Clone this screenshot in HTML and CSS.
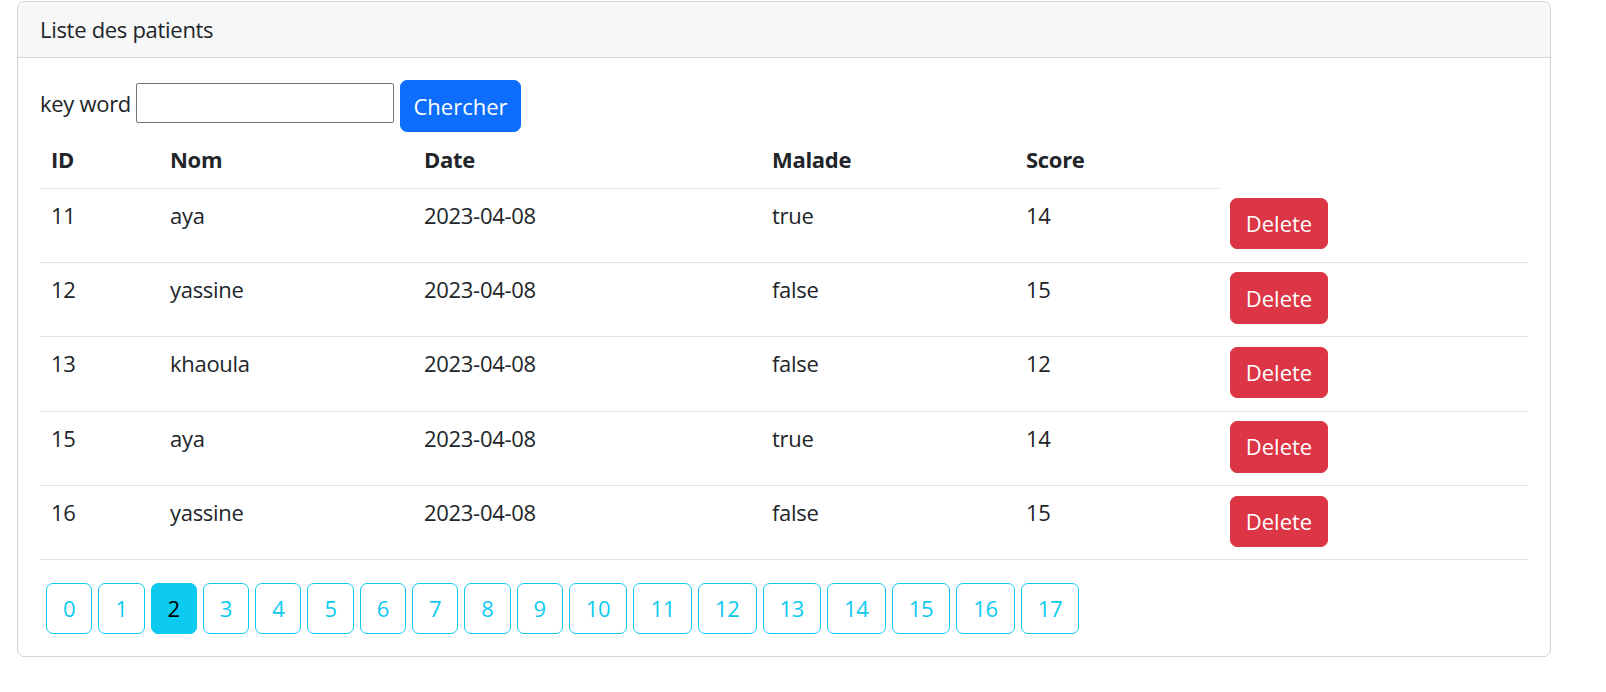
FILE: index.html
```html
<!DOCTYPE html>
<html lang="fr">
<head>
<meta charset="utf-8">
<title>Liste des patients</title>
<link rel="stylesheet" href="styles.css">
</head>
<body>
<div class="page">
  <div class="card">
    <div class="card-header">Liste des patients</div>
    <div class="card-body">
      <form class="search">
        <label class="search-label">key word</label>
        <input class="search-input" type="text">
        <button class="btn btn-primary" type="button">Chercher</button>
      </form>
      <table class="table">
        <colgroup>
          <col class="c-id"><col class="c-nom"><col class="c-date"><col class="c-malade"><col class="c-score"><col class="c-action">
        </colgroup>
        <thead>
          <tr><th>ID</th><th>Nom</th><th>Date</th><th>Malade</th><th>Score</th></tr>
        </thead>
        <tbody>
          <tr><td>11</td><td>aya</td><td>2023-04-08</td><td>true</td><td>14</td><td><button class="btn btn-danger" type="button">Delete</button></td></tr>
          <tr><td>12</td><td>yassine</td><td>2023-04-08</td><td>false</td><td>15</td><td><button class="btn btn-danger" type="button">Delete</button></td></tr>
          <tr><td>13</td><td>khaoula</td><td>2023-04-08</td><td>false</td><td>12</td><td><button class="btn btn-danger" type="button">Delete</button></td></tr>
          <tr><td>15</td><td>aya</td><td>2023-04-08</td><td>true</td><td>14</td><td><button class="btn btn-danger" type="button">Delete</button></td></tr>
          <tr><td>16</td><td>yassine</td><td>2023-04-08</td><td>false</td><td>15</td><td><button class="btn btn-danger" type="button">Delete</button></td></tr>
        </tbody>
      </table>
      <ul class="pages">
        <li><a class="page-btn">0</a></li>
        <li><a class="page-btn">1</a></li>
        <li><a class="page-btn active">2</a></li>
        <li><a class="page-btn">3</a></li>
        <li><a class="page-btn">4</a></li>
        <li><a class="page-btn">5</a></li>
        <li><a class="page-btn">6</a></li>
        <li><a class="page-btn">7</a></li>
        <li><a class="page-btn">8</a></li>
        <li><a class="page-btn">9</a></li>
        <li><a class="page-btn">10</a></li>
        <li><a class="page-btn">11</a></li>
        <li><a class="page-btn">12</a></li>
        <li><a class="page-btn">13</a></li>
        <li><a class="page-btn">14</a></li>
        <li><a class="page-btn">15</a></li>
        <li><a class="page-btn">16</a></li>
        <li><a class="page-btn">17</a></li>
      </ul>
    </div>
  </div>
</div>
</body>
</html>
```
FILE: styles.css
```css
* { box-sizing: border-box; }

body {
  margin: 0;
  background: #fff;
  color: #212529;
  font-family: "Open Sans", "Noto Sans", "DejaVu Sans", sans-serif;
  font-size: 22px;
  line-height: 33px;
  letter-spacing: -0.3px;
}

.page {
  padding: 1px 0 0 17px;
}

.card {
  width: 1534px;
  border: 1px solid #d3d3d3;
  border-radius: 7px;
  background: #fff;
}

.card-header {
  background: #f7f7f7;
  border-bottom: 1px solid #d3d3d3;
  border-radius: 7px 7px 0 0;
  padding: 11px 22px;
  height: 56px;
}

.card-body {
  padding: 22px 22px 22px 22px;
}

.search {
  display: flex;
  align-items: center;
  margin: 0;
  height: 52px;
}

.search-label {
  margin-right: 5px;
  margin-top: -6px;
}

.search-input {
  width: 258px;
  height: 40px;
  border: 1px solid #767676;
  border-radius: 2px;
  padding: 2px 4px;
  margin: 0 6px 6px 0;
  font: inherit;
}

.btn {
  display: inline-flex;
  align-items: center;
  justify-content: center;
  height: 52px;
  padding: 0 12px;
  border: 1px solid transparent;
  border-radius: 7px;
  font: inherit;
  color: #fff;
  cursor: pointer;
}

.btn-primary {
  background: #0d6efd;
  border-color: #0d6efd;
  width: 121px;
}

.btn-danger {
  background: #dc3545;
  border-color: #dc3545;
  width: 98px;
  height: 51.4px;
}

.table {
  width: 1488px;
  border-collapse: collapse;
  table-layout: fixed;
  margin-bottom: 23px;
}

.c-id { width: 119px; }
.c-nom { width: 254px; }
.c-date { width: 348px; }
.c-malade { width: 254px; }
.c-score { width: 204px; }
.c-action { width: 309px; }

.table th,
.table td {
  padding: 11px;
  text-align: left;
  vertical-align: top;
  border-bottom: 1px solid #dee2e6;
}

.table th {
  font-weight: 700;
  padding-bottom: 12px;
}

.table td {
  padding-top: 10px;
}

.table td:last-child {
  padding-top: 9.5px;
  padding-bottom: 12.5px;
}

.pages {
  display: flex;
  list-style: none;
  margin: 0;
  padding: 0;
}

.pages li {
  margin-left: 6px;
}

.page-btn {
  display: inline-flex;
  align-items: center;
  justify-content: center;
  height: 50.5px;
  padding: 0 16px;
  border: 1px solid #0dcaf0;
  border-radius: 7px;
  color: #0dcaf0;
  text-decoration: none;
}

.page-btn.active {
  background: #0dcaf0;
  color: #000;
}
```
